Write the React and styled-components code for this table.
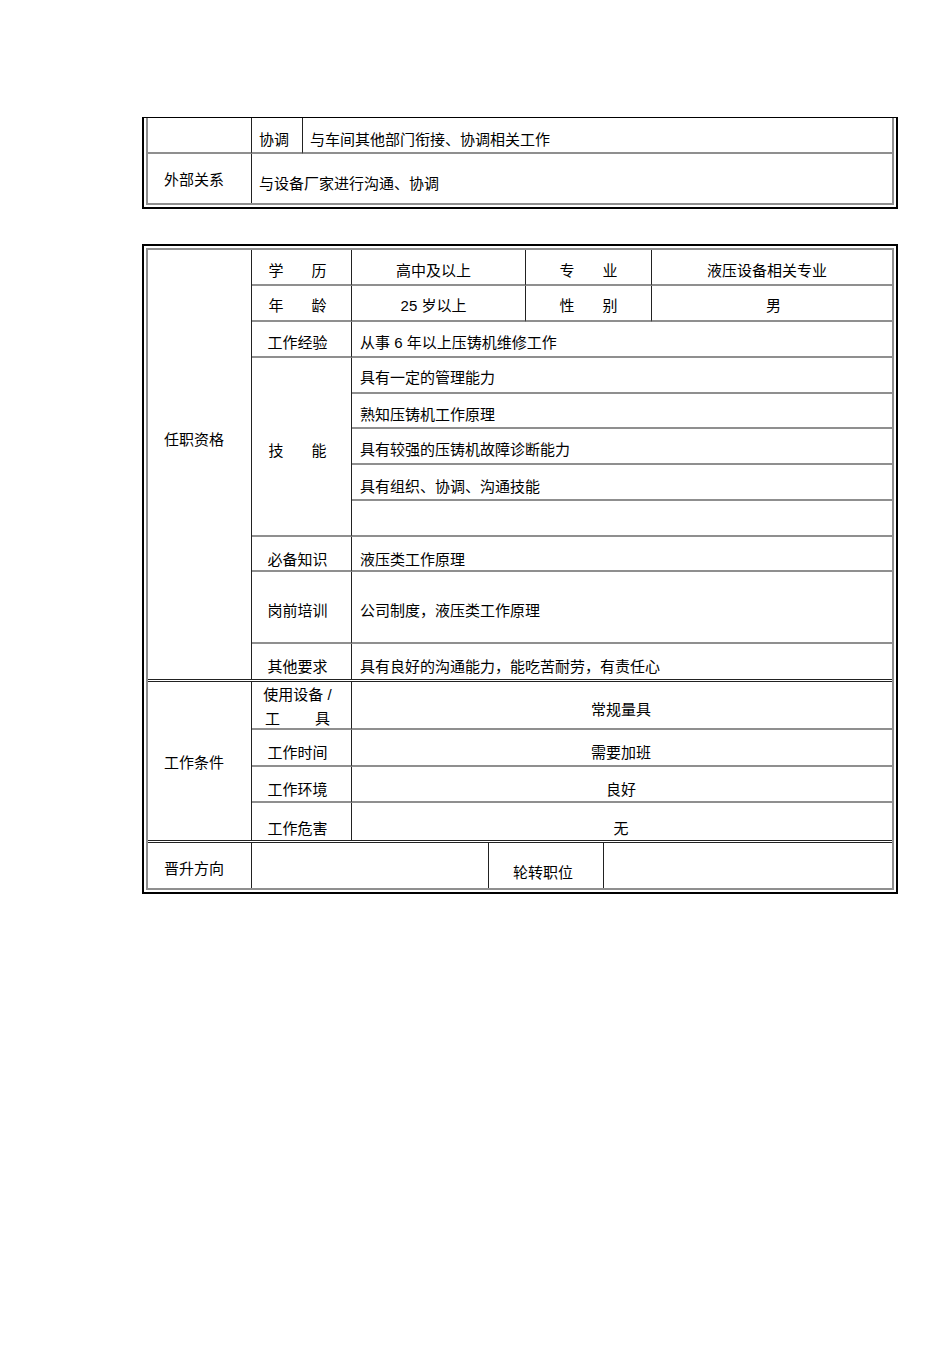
import React from "react";
import styled, { createGlobalStyle } from "styled-components";

const GlobalStyle = createGlobalStyle`
  html, body {
    margin: 0;
    padding: 0;
    background: #fff;
  }
  body {
    font-family: "Liberation Sans", "Noto Sans CJK SC", sans-serif;
    color: #000;
  }
`;

const LINE = "#8f8f8f";
const RULE = "#222";

const Page = styled.div`
  width: 950px;
  min-height: 1345px;
  box-sizing: border-box;
  padding: 117px 0 0 142px;
`;

// double outer frame of a form table
const Frame = styled.div`
  width: 756px;
  box-sizing: border-box;
  border: 2px solid #000;
  border-top: ${(p) => (p.$open ? "1px solid #000" : "2px solid #000")};
  padding: ${(p) => (p.$open ? "0 2px 2px" : "2px")};
  margin-top: ${(p) => p.$gap || 0}px;
`;

const Inner = styled.div`
  border: 2px solid ${LINE};
  border-top: ${(p) => (p.$open ? "none" : `2px solid ${LINE}`)};
`;

const Section = styled.div`
  display: grid;
  grid-template-columns: ${(p) => p.$cols};
  grid-template-rows: ${(p) => p.$rows};
  border-bottom: ${(p) => (p.$double ? `3px double ${RULE}` : "none")};
`;

const Cell = styled.div`
  grid-column: ${(p) => p.$col || "auto"};
  grid-row: ${(p) => p.$row || "auto"};
  display: flex;
  align-items: center;
  justify-content: ${(p) => (p.$center ? "center" : "flex-start")};
  box-sizing: border-box;
  padding-top: ${(p) => Math.max(p.$dy ?? 8, 0)}px;
  padding-bottom: ${(p) => Math.max(-(p.$dy ?? 8), 0)}px;
  padding-left: ${(p) => p.$pl ?? 8}px;
  padding-right: ${(p) => p.$pr ?? 0}px;
  border-right: ${(p) => (p.$nr ? "none" : `1px solid ${RULE}`)};
  border-bottom: ${(p) => (p.$nb ? "none" : `2px solid ${LINE}`)};
  font-size: 15px;
  line-height: 20px;
  white-space: nowrap;
`;

const Label = styled(Cell).attrs((p) => ({ $pl: p.$pl ?? 16 }))``;

const Key = styled(Cell).attrs((p) => ({
  $center: true,
  $pl: p.$pl ?? 0,
  $pr: p.$pr ?? 8,
}))``;

const Value = styled(Cell).attrs((p) => ({
  $center: true,
  $pl: p.$pl ?? 0,
  $pr: p.$pr ?? 10,
}))``;

const Spread = styled.span`
  display: flex;
  justify-content: space-between;
  width: ${(p) => p.$w}px;
`;

const Stack = styled.div`
  display: flex;
  flex-direction: column;
  align-items: center;
  line-height: 24px;
`;

const skills = [
  ["具有一定的管理能力", 6],
  ["熟知压铸机工作原理", 9],
  ["具有较强的压铸机故障诊断能力", 8],
  ["具有组织、协调、沟通技能", 10],
  ["", 8],
];

const App = () => {
  return (
    <Page>
      <GlobalStyle />

      <Frame $open>
        <Inner $open>
          <Section $cols="104px 51px 1fr" $rows="36px 49px">
            <Cell $col="1" $row="1" />
            <Cell $col="2" $row="1" $pl={7} $dy={10}>
              协调
            </Cell>
            <Cell $col="3" $row="1" $pl={7} $dy={10} $nr>
              与车间其他部门衔接、协调相关工作
            </Cell>
            <Label $col="1" $row="2" $dy={3} $nb>
              外部关系
            </Label>
            <Cell $col="2 / 4" $row="2" $pl={7} $dy={11} $nb $nr>
              与设备厂家进行沟通、协调
            </Cell>
          </Section>
        </Inner>
      </Frame>

      <Frame $gap={35}>
        <Inner>
          <Section
            $double
            $cols="104px 100px 174px 126px 1fr"
            $rows="36px 36px 36px 36px 35px 36px 36px 36px 35px 72px 35px"
          >
            <Label $col="1" $row="1 / span 11" $dy={-49} $nb>
              任职资格
            </Label>

            <Key $col="2" $row="1">
              <Spread $w={58}>
                <span>学</span>
                <span>历</span>
              </Spread>
            </Key>
            <Value $col="3" $row="1">高中及以上</Value>
            <Key $col="4" $row="1" $pr={0}>
              <Spread $w={58}>
                <span>专</span>
                <span>业</span>
              </Spread>
            </Key>
            <Value $col="5" $row="1" $nr>
              液压设备相关专业
            </Value>

            <Key $col="2" $row="2" $dy={6}>
              <Spread $w={58}>
                <span>年</span>
                <span>龄</span>
              </Spread>
            </Key>
            <Value $col="3" $row="2" $dy={6}>
              25 岁以上
            </Value>
            <Key $col="4" $row="2" $pr={0} $dy={6}>
              <Spread $w={58}>
                <span>性</span>
                <span>别</span>
              </Spread>
            </Key>
            <Value $col="5" $row="2" $pr={0} $pl={3} $dy={6} $nr>
              男
            </Value>

            <Key $col="2" $row="3">工作经验</Key>
            <Cell $col="3 / 6" $row="3" $nr>
              从事 6 年以上压铸机维修工作
            </Cell>

            <Key $col="2" $row="4 / span 5">
              <Spread $w={58}>
                <span>技</span>
                <span>能</span>
              </Spread>
            </Key>
            {skills.map(([text, dy], i) => (
              <Cell key={i} $col="3 / 6" $row={`${4 + i}`} $dy={dy} $nr>
                {text}
              </Cell>
            ))}

            <Key $col="2" $row="9" $dy={13}>
              必备知识
            </Key>
            <Cell $col="3 / 6" $row="9" $dy={13} $nr>
              液压类工作原理
            </Cell>

            <Key $col="2" $row="10">岗前培训</Key>
            <Cell $col="3 / 6" $row="10" $nr>
              公司制度，液压类工作原理
            </Cell>

            <Key $col="2" $row="11" $dy={11} $nb>
              其他要求
            </Key>
            <Cell $col="3 / 6" $row="11" $dy={11} $nb $nr>
              具有良好的沟通能力，能吃苦耐劳，有责任心
            </Cell>
          </Section>

          <Section $double $cols="104px 100px 1fr" $rows="48px 37px 36px 37px">
            <Label $col="1" $row="1 / span 4" $dy={4} $nb>
              工作条件
            </Label>

            <Key $col="2" $row="1" $dy={4}>
              <Stack>
                <span>使用设备 /</span>
                <Spread $w={65}>
                  <span>工</span>
                  <span>具</span>
                </Spread>
              </Stack>
            </Key>
            <Value $col="3" $row="1" $dy={10} $pr={2} $nr>
              常规量具
            </Value>

            <Key $col="2" $row="2" $dy={11}>
              工作时间
            </Key>
            <Value $col="3" $row="2" $dy={11} $pr={2} $nr>
              需要加班
            </Value>

            <Key $col="2" $row="3" $dy={12}>
              工作环境
            </Key>
            <Value $col="3" $row="3" $dy={12} $pr={2} $nr>
              良好
            </Value>

            <Key $col="2" $row="4" $dy={15} $nb>
              工作危害
            </Key>
            <Value $col="3" $row="4" $dy={15} $pr={2} $nb $nr>
              无
            </Value>
          </Section>

          <Section $cols="104px 237px 115px 1fr" $rows="45px">
            <Label $col="1" $row="1" $dy={7} $nb>
              晋升方向
            </Label>
            <Cell $col="2" $row="1" $nb />
            <Key $col="3" $row="1" $dy={15} $pr={6} $nb>
              轮转职位
            </Key>
            <Cell $col="4" $row="1" $nb $nr />
          </Section>
        </Inner>
      </Frame>
    </Page>
  );
};

export default App;
